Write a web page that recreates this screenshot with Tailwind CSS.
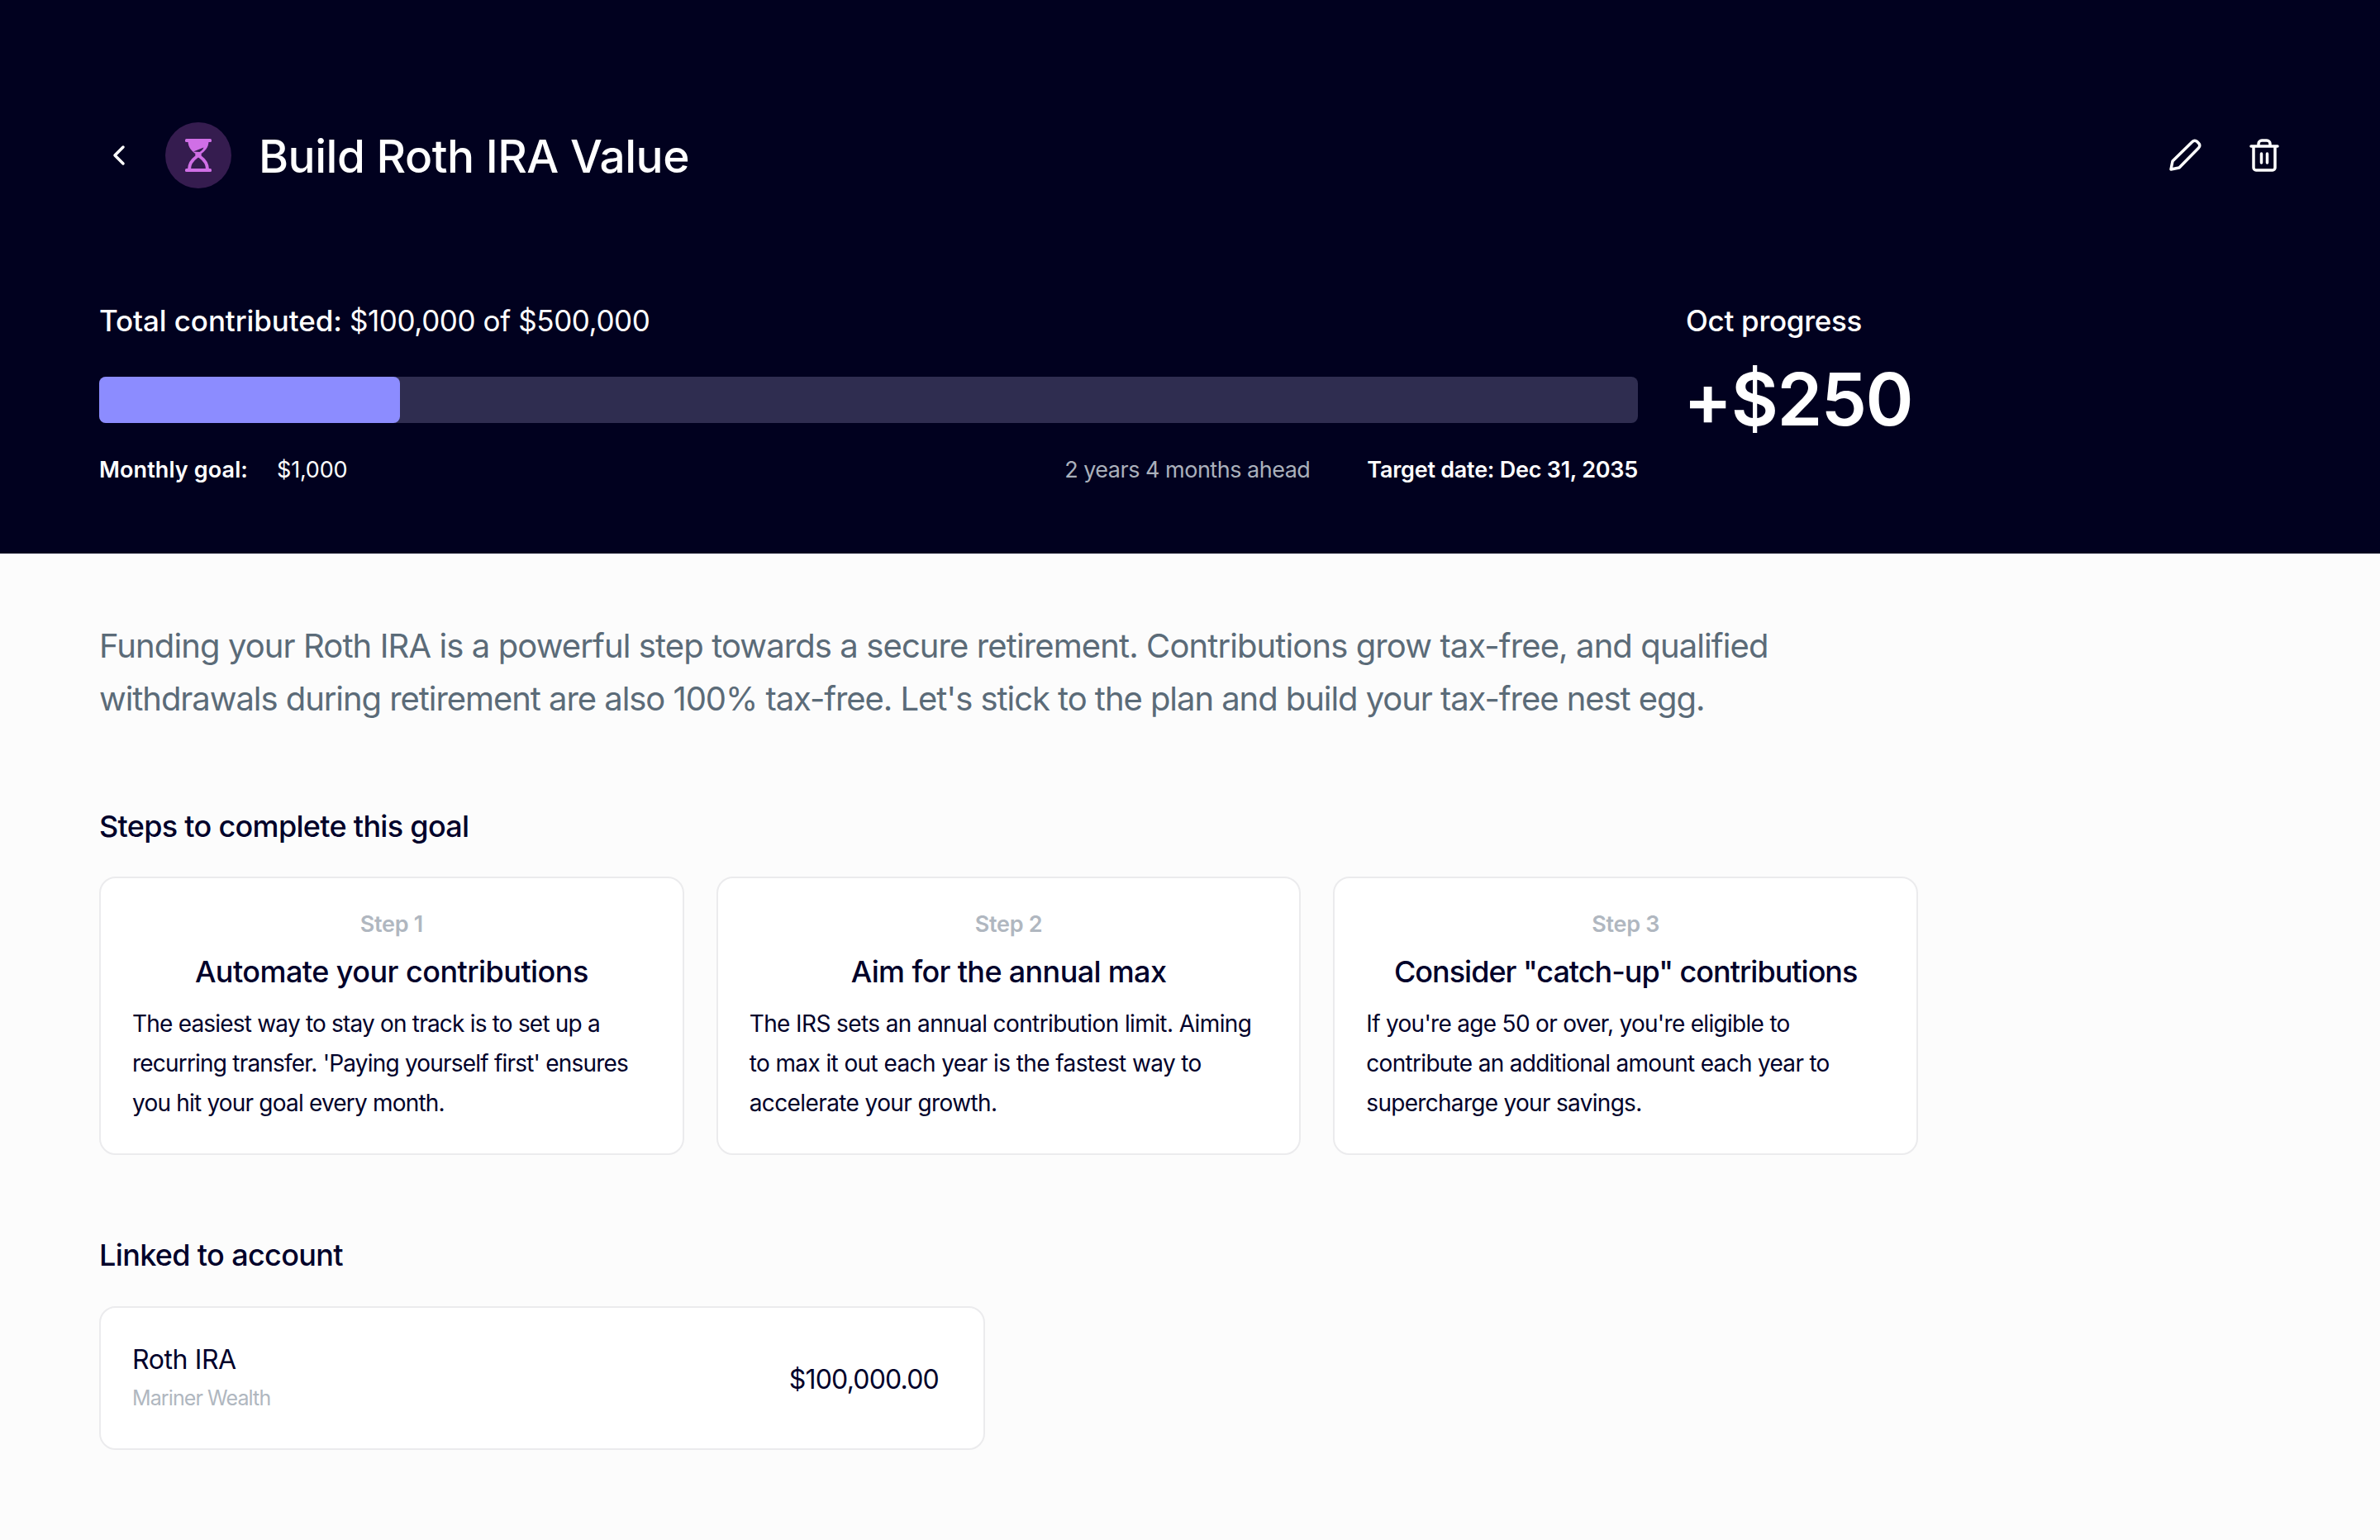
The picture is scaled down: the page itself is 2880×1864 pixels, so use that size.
<!DOCTYPE html>
<html>
<head>
  <title>Build Roth IRA Value</title>
  <script src="https://cdn.jsdelivr.net/npm/@tailwindcss/browser@4"></script>
</head>
<body class="bg-[#fcfcfc] text-[#01012a] font-['Inter',sans-serif] min-h-screen">

  <!-- Header -->
  <header class="bg-[#01011f] text-white h-[670px] px-[120px] pt-[148px]">
    <div class="flex items-center h-[80px]">
      <svg class="w-[18px] h-[26px] ml-[15px]" viewBox="0 0 18 26" fill="none" stroke="white" stroke-width="3.5" stroke-linecap="round" stroke-linejoin="round"><path d="M14 3L4 13l10 10"/></svg>
      <div class="w-[80px] h-[80px] ml-[47px] rounded-full bg-[#351c4f] flex items-center justify-center">
        <svg class="w-[32px] h-[40px]" viewBox="0 0 32 40" fill="none">
          <rect x="0" y="0" width="32" height="4" rx="1.500" fill="#d06fe6"/>
          <rect x="0" y="36" width="32" height="4" rx="1.500" fill="#d06fe6"/>
          <path d="M3.500 3h25c0 8-5 12-10 16l-2.500 2-2.500-2C8.500 15 3.500 11 3.500 3z" fill="#d06fe6"/>
          <path d="M10 15.500L22.500 10.500c-1 2.500-3 4.500-5 5.500z" fill="#351c4f"/>
          <path d="M5 37c0-7 3-11 8.500-15L19 18M27 37c0-7-3-11-8.500-15L13 18" stroke="#d06fe6" stroke-width="4"/>
        </svg>
      </div>
      <h1 class="ml-[33px] pt-[2px] text-[55px] leading-[80px] font-medium tracking-[-0.5px]">Build Roth IRA Value</h1>
      <div class="ml-auto flex items-center gap-[58px] mr-[2px]">
        <svg class="w-[40px] h-[40px]" viewBox="0 0 40 40" fill="none" stroke="white" stroke-width="3.5" stroke-linejoin="round" stroke-linecap="round"><path d="M3 37l2-10L29 3.500c1.700-1.700 4-1.700 5.500-.2l2.200 2.200c1.500 1.500 1.500 3.800-.2 5.500L13 35z"/></svg>
        <svg class="w-[36px] h-[40px]" viewBox="0 0 36 40" fill="none" stroke="white" stroke-width="3.5" stroke-linecap="round" stroke-linejoin="round"><path d="M2 9h32M5 9v26a3 3 0 0 0 3 3h20a3 3 0 0 0 3-3V9M11 9V6a4 4 0 0 1 4-4h6a4 4 0 0 1 4 4v3M14.500 18v11M21.500 18v11"/></svg>
      </div>
    </div>

    <div class="flex mt-[136px]">
      <div class="w-[1862px]">
        <p class="text-[35px] leading-[48px] font-medium tracking-[-0.1px]">Total contributed: <span class="font-normal tracking-[-0.4px]">$100,000 of $500,000</span></p>
        <div class="mt-[44px] h-[56px] rounded-[8px] bg-[#2f2d50]">
          <div class="w-[364px] h-full rounded-[8px] bg-[#8c8cff]"></div>
        </div>
        <div class="flex items-center mt-[39px] text-[27px] leading-[36px]">
          <span class="font-semibold tracking-[0.1px]">Monthly goal:</span>
          <span class="ml-[35px] tracking-[-0.2px]">$1,000</span>
          <span class="ml-auto text-[#aab0bb] tracking-[-0.5px]">2 years 4 months ahead</span>
          <span class="ml-[69px] font-semibold tracking-[-0.25px]">Target date: Dec 31, 2035</span>
        </div>
      </div>
      <div class="ml-[58px]">
        <p class="text-[35px] leading-[48px] font-medium tracking-[-0.3px]">Oct progress</p>
        <p class="mt-[21px] -ml-[3px] text-[88px] leading-[100px] font-semibold tracking-[-1.5px]">+$250</p>
      </div>
    </div>
  </header>

  <main class="px-[120px]">
    <p class="mt-[80px] w-[2200px] text-[40px] leading-[64px] tracking-[-0.9px] text-[#5b6b78]">Funding your Roth IRA is a powerful step towards a secure retirement. Contributions grow tax-free, and qualified <span class="block tracking-[-1.06px]">withdrawals during retirement are also 100% tax-free. Let's stick to the plan and build your tax-free nest egg.</span></p>

    <h2 class="mt-[98px] text-[36px] leading-[48px] font-medium tracking-[-0.7px]">Steps to complete this goal</h2>
    <div class="mt-[37px] grid grid-cols-3 gap-[39px] w-[2201px]">
      <div class="h-[337px] bg-white border-2 border-[#ebebed] rounded-[20px] px-[38px] pt-[38px]">
        <p class="text-center text-[27px] leading-[36px] font-semibold tracking-[-0.3px] text-[#b0b7c0]">Step 1</p>
        <h3 class="mt-[15px] text-center text-[36px] leading-[48px] font-medium tracking-[-0.55px]">Automate your contributions</h3>
        <p class="mt-[15px] text-[28px] leading-[48px] tracking-[-0.8px]">The easiest way to stay on track is to set up a recurring transfer. 'Paying yourself first' ensures you hit your goal every month.</p>
      </div>
      <div class="h-[337px] bg-white border-2 border-[#ebebed] rounded-[20px] px-[38px] pt-[38px]">
        <p class="text-center text-[27px] leading-[36px] font-semibold tracking-[-0.3px] text-[#b0b7c0]">Step 2</p>
        <h3 class="mt-[15px] text-center text-[36px] leading-[48px] font-medium tracking-[-0.65px]">Aim for the annual max</h3>
        <p class="mt-[15px] text-[28px] leading-[48px] tracking-[-0.6px]">The IRS sets an annual contribution limit. Aiming to max it out each year is the fastest way to accelerate your growth.</p>
      </div>
      <div class="h-[337px] bg-white border-2 border-[#ebebed] rounded-[20px] px-[38px] pt-[38px]">
        <p class="text-center text-[27px] leading-[36px] font-semibold tracking-[-0.3px] text-[#b0b7c0]">Step 3</p>
        <h3 class="mt-[15px] text-center text-[36px] leading-[48px] font-medium tracking-[-1px]">Consider "catch-up" contributions</h3>
        <p class="mt-[15px] text-[28px] leading-[48px] tracking-[-0.7px]">If you're age 50 or over, you're eligible to contribute an additional amount each year to supercharge your savings.</p>
      </div>
    </div>

    <h2 class="mt-[97px] text-[36px] leading-[48px] font-medium tracking-[-0.65px]">Linked to account</h2>
    <div class="mt-[38px] w-[1072px] h-[174px] bg-white border-2 border-[#ebebed] rounded-[20px] pl-[38px] pr-[54px] pb-[3px] flex items-center justify-between">
      <div>
        <p class="text-[32px] leading-[44px] tracking-[-0.4px]">Roth IRA</p>
        <p class="mt-[6px] text-[25px] leading-[36px] tracking-[-0.9px] text-[#b0b7c0]">Mariner Wealth</p>
      </div>
      <p class="pt-[7px] text-[32px] leading-[44px] tracking-[-0.8px]">$100,000.00</p>
    </div>
  </main>
</body>
</html>
